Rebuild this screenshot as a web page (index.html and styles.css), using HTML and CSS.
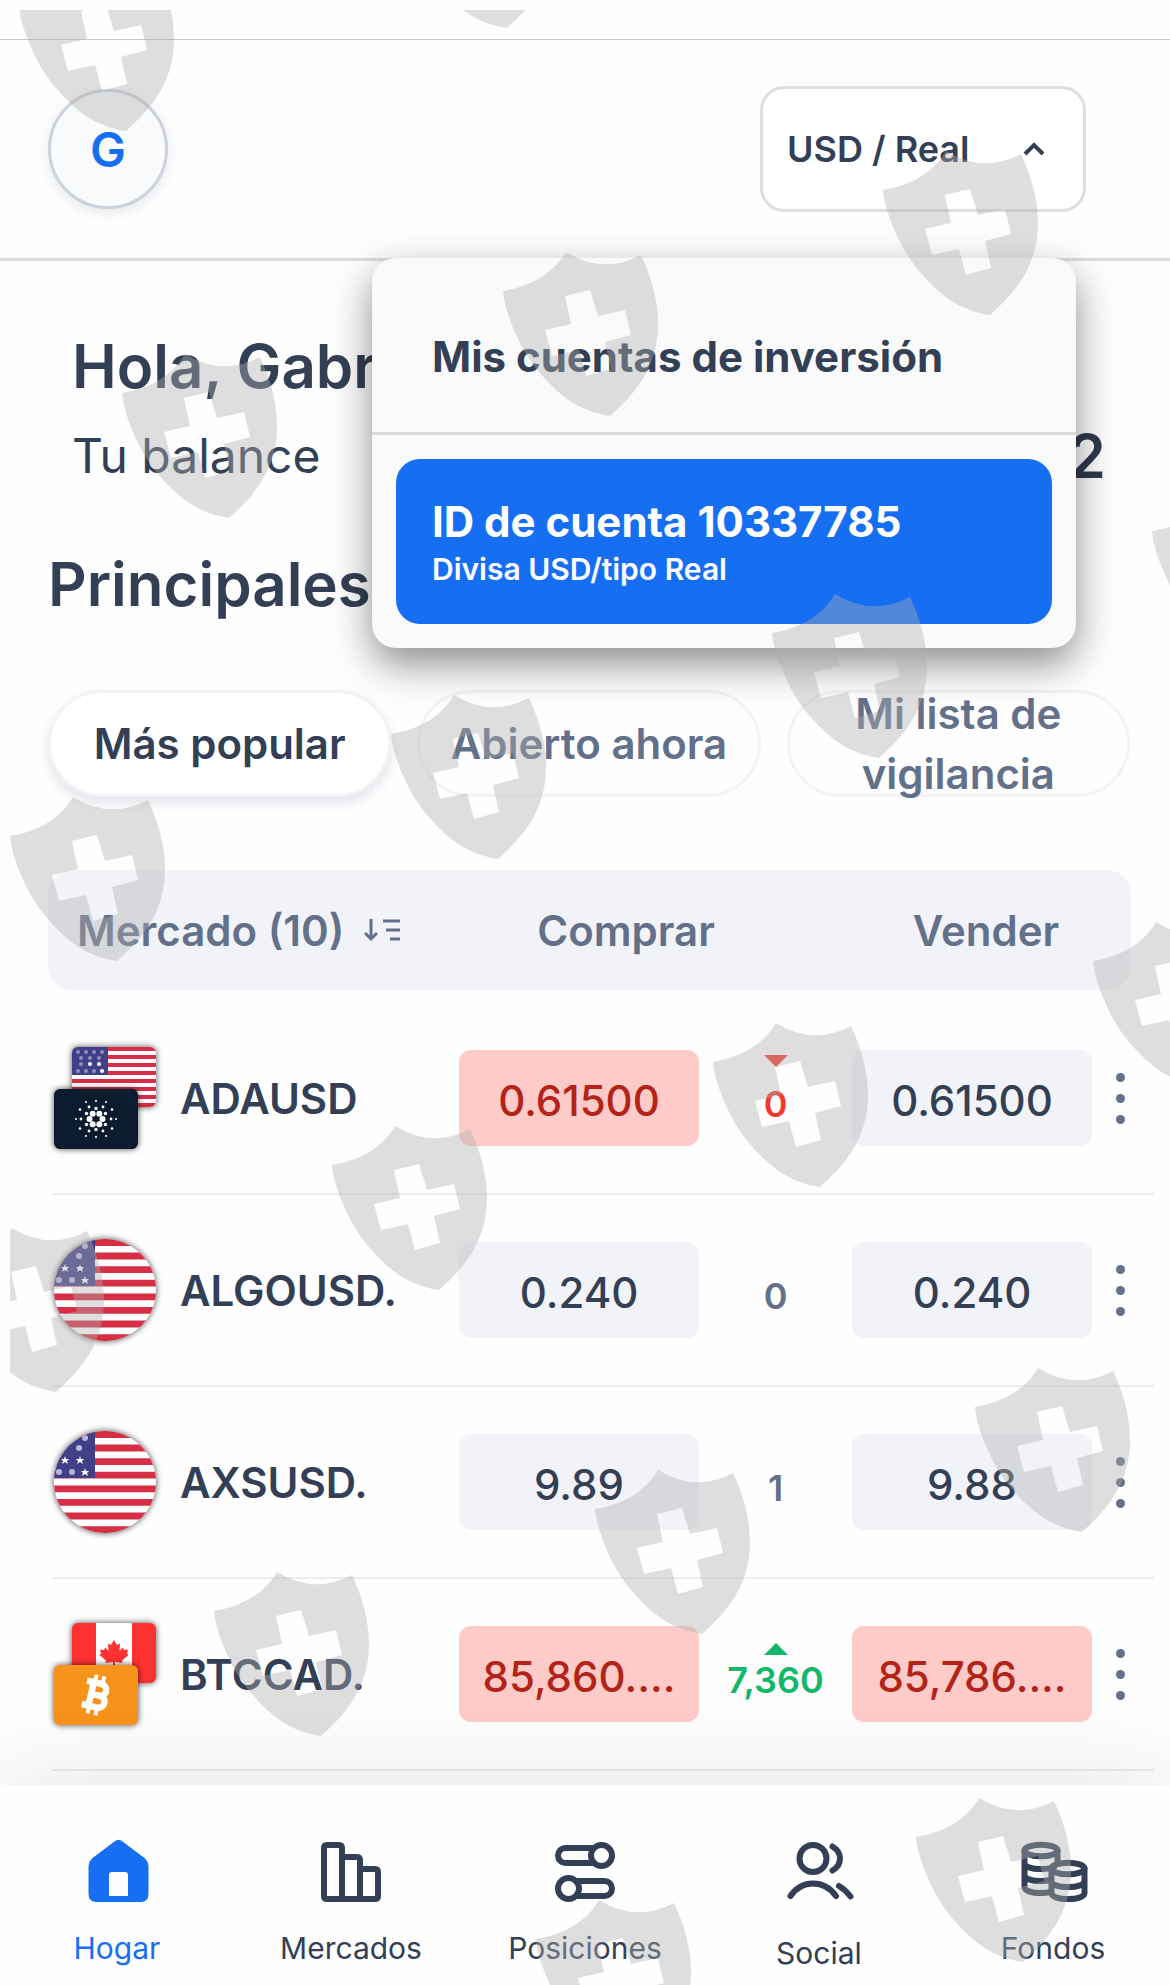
FILE: index.html
```html
<!DOCTYPE html>
<html lang="es">
<head>
<meta charset="utf-8">
<meta name="viewport" content="width=device-width, initial-scale=1">
<title>Hogar</title>
<link rel="stylesheet" href="styles.css">
</head>
<body>
<svg class="defs" aria-hidden="true">
  <defs>
    <path id="shield" fill-rule="evenodd" d="M0 39C20 36 48 26 63 0Q100 23 138 3C148 24 155 48 155 72C155 115 132 142 107 164C80 160 62 147 48 133C34 119 23 104 16 89C6 68 1 52 0 39ZM62 44L68 72L42 78L49 104L76 98L83 124L108 117L102 90L128 83L122 58L95 64L87 38Z"/>
    <polygon id="star" points="0,-4 1,-1 4,-1 2,1 3,4 0,2 -3,4 -2,1 -4,-1 -1,-1"/>
    <clipPath id="round"><circle cx="52" cy="52" r="51"/></clipPath>
    <clipPath id="card-back"><rect x="19" y="1" width="84" height="60" rx="6"/></clipPath>
    <g id="usd-round">
      <g clip-path="url(#round)">
        <rect width="104" height="104" fill="#fff"/>
        <path d="M0 4.500H104M0 18H104M0 31.600H104M0 45.200H104M0 58.800H104M0 72.400H104M0 86H104M0 99.600H104" stroke="#d62f45" stroke-width="6.800"/>
        <rect width="42" height="48" fill="#413f87"/>
        <g fill="#fff"><use href="#star" x="12" y="30"/><use href="#star" x="27" y="30"/><use href="#star" x="32" y="42"/></g>
        <g fill="#b9b8dc"><circle cx="32" cy="8" r="3"/><circle cx="26" cy="18" r="3"/><circle cx="12" cy="18" r="2"/><circle cx="6" cy="42" r="3"/><circle cx="19" cy="42" r="3"/></g>
      </g>
    </g>
  </defs>
</svg>

<div class="status-bar"></div>

<header class="topbar">
  <button class="avatar" type="button" aria-label="Perfil">G</button>
  <button class="account-toggle" type="button" aria-expanded="true" aria-controls="accounts">
    <span>USD / Real</span>
    <svg width="26" height="18" viewBox="0 0 26 18" aria-hidden="true"><path d="M4 14L13 5L22 14" fill="none" stroke="#333f55" stroke-width="4"/></svg>
  </button>
  <section class="accounts" id="accounts">
    <h2 class="accounts-title">Mis cuentas de inversión</h2>
    <div class="accounts-list">
      <button class="account" type="button">
        <span class="account-id">ID de cuenta 10337785</span>
        <span class="account-type">Divisa USD/tipo Real</span>
      </button>
    </div>
  </section>
</header>

<main class="content">
  <section class="summary">
    <h1 class="greeting">Hola, Gabr</h1>
    <div class="balance"><span>Tu balance</span><strong>2</strong></div>
  </section>

  <h2 class="section-title">Principales</h2>

  <div class="chips">
    <button class="chip chip-active" type="button">Más popular</button>
    <button class="chip" type="button">Abierto ahora</button>
    <button class="chip" type="button">Mi lista de vigilancia</button>
  </div>

  <table class="markets">
    <thead>
      <tr class="head">
        <th scope="col"><button class="sort" type="button">Mercado (10)
          <svg width="36" height="24" viewBox="0 0 36 24" aria-hidden="true"><path d="M7 1V21M1 15L7 21L13 15M19 3H36M22 12H36M26 21H36" fill="none" stroke="#63708a" stroke-width="3"/></svg></button></th>
        <th scope="col">Comprar</th>
        <th scope="col">Vender</th>
      </tr>
    </thead>
    <tbody>
      <tr class="row">
        <th scope="row" class="market">
          <svg class="flag" viewBox="0 0 104 104" aria-hidden="true">
            <g class="card"><g clip-path="url(#card-back)">
              <rect x="19" y="1" width="84" height="60" fill="#fff"/>
              <path d="M19 3H103M19 11H103M19 19H103M19 27H103M19 35H103M19 43H103M19 51H103M19 59H103" stroke="#d62f45" stroke-width="4"/>
              <rect x="19" y="1" width="36" height="28" fill="#413f87"/>
              <g fill="#8f8ec0"><circle cx="25" cy="6" r="2"/><circle cx="33" cy="6" r="2"/><circle cx="41" cy="6" r="2"/><circle cx="49" cy="6" r="2"/><circle cx="28" cy="12" r="2"/><circle cx="37" cy="12" r="2"/><circle cx="46" cy="12" r="2"/><circle cx="28" cy="18" r="2"/><circle cx="25" cy="25" r="2"/><circle cx="33" cy="25" r="2"/><circle cx="41" cy="25" r="2"/></g>
              <g fill="#fff"><circle cx="37" cy="18" r="2"/><circle cx="46" cy="18" r="2"/><circle cx="49" cy="25" r="2"/></g>
            </g></g>
            <g class="card"><rect x="1" y="43" width="84" height="60" rx="6" fill="#0b1c2e"/></g>
            <g transform="translate(43 73)" fill="#fff">
              <circle cx="-6.500" cy="0" r="3"/><circle cx="6.500" cy="0" r="3"/><circle cx="-3.300" cy="-5.200" r="3"/><circle cx="3.300" cy="-5.200" r="3"/><circle cx="-3.300" cy="5.200" r="3"/><circle cx="3.300" cy="5.200" r="3"/>
              <circle cx="0" cy="-10.500" r="1.700"/><circle cx="0" cy="10.500" r="1.700"/><circle cx="-9.500" cy="-5.500" r="1.700"/><circle cx="9.500" cy="-5.500" r="1.700"/><circle cx="-9.500" cy="5.500" r="1.700"/><circle cx="9.500" cy="5.500" r="1.700"/>
              <circle cx="-7" cy="-12" r="1.400"/><circle cx="7" cy="-12" r="1.400"/><circle cx="-7" cy="12" r="1.400"/><circle cx="7" cy="12" r="1.400"/><circle cx="-15" cy="0" r="1.400"/><circle cx="15" cy="0" r="1.400"/>
              <circle cx="0" cy="-18" r="1.100"/><circle cx="0" cy="18" r="1.100"/><circle cx="-16" cy="-9.500" r="1.300"/><circle cx="16" cy="-9.500" r="1.300"/><circle cx="-16" cy="9.500" r="1.300"/><circle cx="16" cy="9.500" r="1.300"/><circle cx="-10" cy="-17" r="1"/><circle cx="10" cy="-17" r="1"/><circle cx="-10" cy="17" r="1"/><circle cx="10" cy="17" r="1"/><circle cx="-20" cy="0" r="1"/><circle cx="20" cy="0" r="1"/>
            </g>
          </svg>
          <span>ADAUSD</span>
        </th>
        <td><button class="price price-down" type="button">0.61500</button></td>
        <td class="change change-down"><svg width="24" height="24" viewBox="0 0 24 24" aria-hidden="true"><path d="M0 0H24L12 12Z"/></svg><span>0</span></td>
        <td><button class="price" type="button">0.61500</button></td>
        <td><button class="more" type="button" aria-label="Opciones de ADAUSD"><i></i><i></i><i></i></button></td>
      </tr>
      <tr class="row">
        <th scope="row" class="market">
          <svg class="flag card" viewBox="0 0 104 104" aria-hidden="true"><use href="#usd-round"/></svg>
          <span>ALGOUSD.</span>
        </th>
        <td><button class="price" type="button">0.240</button></td>
        <td class="change"><svg width="24" height="24" aria-hidden="true"></svg><span>0</span></td>
        <td><button class="price" type="button">0.240</button></td>
        <td><button class="more" type="button" aria-label="Opciones de ALGOUSD"><i></i><i></i><i></i></button></td>
      </tr>
      <tr class="row">
        <th scope="row" class="market">
          <svg class="flag card" viewBox="0 0 104 104" aria-hidden="true"><use href="#usd-round"/></svg>
          <span>AXSUSD.</span>
        </th>
        <td><button class="price" type="button">9.89</button></td>
        <td class="change"><svg width="24" height="24" aria-hidden="true"></svg><span>1</span></td>
        <td><button class="price" type="button">9.88</button></td>
        <td><button class="more" type="button" aria-label="Opciones de AXSUSD"><i></i><i></i><i></i></button></td>
      </tr>
      <tr class="row">
        <th scope="row" class="market">
          <svg class="flag" viewBox="0 0 104 104" aria-hidden="true">
            <g class="card"><g clip-path="url(#card-back)">
              <rect x="19" y="1" width="84" height="60" fill="#ff3131"/>
              <rect x="43" y="1" width="36" height="60" fill="#fff"/>
              <path fill="#ff3131" d="M61 18L64 23L67 21.500L66.500 29L70 25.500L71 28L75 27.500L74 31.500L75.500 33L69 38.500L69.500 41L62 40V46H60V40L52.500 41L53 38.500L46.500 33L48 31.500L47 27.500L51 28L52 25.500L55.500 29L55 21.500L58 23Z"/>
            </g></g>
            <g class="card"><rect x="1" y="43" width="84" height="60" rx="6" fill="#f7931a"/></g>
            <g transform="translate(43 73) rotate(13)" fill="none" stroke="#fff">
              <path d="M-5 -12V12M-12 -12H3A6 6 0 0 1 3 0H-5M3 0H4A6 6 0 0 1 4 12H-12" stroke-width="6.500"/>
              <path d="M-4 -12V-20M4 -12V-20M-4 12V20M4 12V20" stroke-width="4"/>
            </g>
          </svg>
          <span>BTCCAD.</span>
        </th>
        <td><button class="price price-down" type="button">85,860....</button></td>
        <td class="change change-up"><svg width="24" height="24" viewBox="0 0 24 24" aria-hidden="true"><path d="M0 24H24L12 12Z"/></svg><span>7,360</span></td>
        <td><button class="price price-down" type="button">85,786....</button></td>
        <td><button class="more" type="button" aria-label="Opciones de BTCCAD"><i></i><i></i><i></i></button></td>
      </tr>
    </tbody>
  </table>
</main>

<nav class="tabs">
  <a class="tab tab-active" href="#hogar">
    <svg width="72" height="72" viewBox="0 0 72 72" aria-hidden="true"><path class="solid" fill-rule="evenodd" d="M33.500 5.500Q37.500 2 41.500 5.500L63.500 22Q67.500 25.500 67.500 31V58Q67.500 66 59.500 66H15.500Q7.500 66 7.500 58V31Q7.500 25.500 11.500 22ZM28 60H47V39Q47 36 44 36H31Q28 36 28 39Z"/></svg>
    <span>Hogar</span>
  </a>
  <a class="tab" href="#mercados">
    <svg width="72" height="72" viewBox="0 0 72 72" aria-hidden="true"><path d="M12 9H24Q27 9 27 12V63H12Q9 63 9 60V12Q9 9 12 9ZM27 21H42Q45 21 45 24V63M45 33H60Q63 33 63 36V60Q63 63 60 63H27"/></svg>
    <span>Mercados</span>
  </a>
  <a class="tab" href="#posiciones">
    <svg width="72" height="72" viewBox="0 0 72 72" aria-hidden="true"><path d="M43 12H16.500A7.500 7.500 0 0 0 16.500 27H43M29 45H55.500A7.500 7.500 0 0 1 55.500 60H29"/><circle cx="52.500" cy="19.500" r="10.500"/><circle cx="19.500" cy="52.500" r="10.500"/></svg>
    <span>Posiciones</span>
  </a>
  <a class="tab" href="#social">
    <svg width="72" height="77" viewBox="0 0 72 77" aria-hidden="true"><circle cx="30" cy="22.500" r="13.500"/><path d="M49.500 10.500Q57 15 57 22.500Q57 30 49.500 34.500M7.500 60Q16 47.500 30 47.500Q44 47.500 53 60M56 50Q62 53.500 67.500 60.500"/></svg>
    <span>Social</span>
  </a>
  <a class="tab" href="#fondos">
    <svg width="72" height="72" viewBox="0 0 72 72" aria-hidden="true"><ellipse cx="24" cy="14.500" rx="16.500" ry="5.800"/><path d="M7.500 14.500V51C7.500 54.500 14 57 24 57Q29 57 33 56M40.500 14.500V27M7.500 27C7.500 30.500 14 33 24 33Q32 33 37 31M7.500 39C7.500 42.500 14 45 24 45Q29 45 33 44"/><ellipse cx="51" cy="32.500" rx="16.500" ry="5.800"/><path d="M34.500 32.500V57C34.500 60.500 41 63 51 63S67.500 60.500 67.500 57V32.500M34.500 45C34.500 48.500 41 51 51 51S67.500 48.500 67.500 45"/></svg>
    <span>Fondos</span>
  </a>
</nav>

<div class="watermark" aria-hidden="true">
  <svg width="100%" height="100%">
    <g transform="translate(-10 -10)">
      <use href="#shield" x="19" y="-33"/>
      <use href="#shield" x="400" y="-136"/>
      <use href="#shield" x="883" y="151"/>
      <use href="#shield" x="503" y="252"/>
      <use href="#shield" x="122" y="354"/>
      <use href="#shield" x="1152" y="492"/>
      <use href="#shield" x="772" y="594"/>
      <use href="#shield" x="391" y="695"/>
      <use href="#shield" x="10" y="797"/>
      <use href="#shield" x="1093" y="922"/>
      <use href="#shield" x="713" y="1023"/>
      <use href="#shield" x="332" y="1126"/>
      <use href="#shield" x="-51" y="1228"/>
      <use href="#shield" x="975" y="1368"/>
      <use href="#shield" x="595" y="1470"/>
      <use href="#shield" x="214" y="1572"/>
      <use href="#shield" x="916" y="1798"/>
      <use href="#shield" x="536" y="1900"/>
    </g>
  </svg>
</div>
</body>
</html>
```

FILE: styles.css
```css
* { box-sizing: border-box; }

body {
  position: relative;
  margin: 0;
  overflow-x: hidden;
  background: #fefefe;
  color: #333f55;
  font-family: Inter, "Liberation Sans", sans-serif;
  font-optical-sizing: none;
}

h1, h2 { margin: 0; font-weight: 600; }

button {
  margin: 0;
  padding: 0;
  border: 0;
  background: none;
  color: inherit;
  font: inherit;
  cursor: pointer;
}

.defs { position: absolute; width: 0; height: 0; }

.status-bar { height: 40px; border-bottom: 1px solid #c3c6c7; }

/* Top bar and account menu */
.topbar {
  position: relative;
  z-index: 2;
  display: flex;
  align-items: center;
  justify-content: space-between;
  height: 221px;
  padding: 0 84px 0 48px;
  border-bottom: 3px solid #dcdddd;
}

.avatar {
  width: 120px;
  height: 120px;
  border: 3px solid #ccd2dd;
  border-radius: 50%;
  background: #f9fafb;
  box-shadow: 0 4px 12px rgba(51, 63, 85, .12);
  color: #166ff3;
  font-size: 48px;
  font-weight: 600;
}

.account-toggle {
  display: flex;
  align-items: center;
  justify-content: space-between;
  width: 326px;
  height: 126px;
  padding: 0 36px 0 24px;
  border: 3px solid #dedede;
  border-radius: 24px;
  background: #fff;
  font-size: 36px;
  font-weight: 600;
}

.accounts {
  position: absolute;
  top: 218px;
  right: 94px;
  width: 704px;
  border-radius: 24px;
  background: #fafafa;
  box-shadow: 0 16px 40px rgba(0, 0, 0, .45);
}

.accounts-title {
  padding: 73px 60px 49px;
  border-bottom: 3px solid #d9d9da;
  font-size: 42px;
  font-weight: 700;
  line-height: 52px;
}

.accounts-list { padding: 24px; }

.account {
  display: flex;
  flex-direction: column;
  width: 100%;
  padding: 36px 36px 35px;
  border-radius: 24px;
  background: #166ff3;
  color: #fff;
  text-align: left;
}

.account-id { font-size: 42px; font-weight: 700; line-height: 54px; }
.account-type { font-size: 30px; font-weight: 600; line-height: 40px; }

/* Greeting and balance */
.content { padding: 69px 0 14px; }
.summary { padding: 0 64px 0 72px; }
.greeting { font-size: 60px; line-height: 72px; }

.balance {
  display: flex;
  align-items: center;
  justify-content: space-between;
  margin-top: 18px;
  font-size: 48px;
  line-height: 72px;
}

.balance strong { color: #2f3a50; font-size: 60px; font-weight: 600; }

.section-title {
  margin: 56px 48px 70px;
  font-size: 60px;
  line-height: 72px;
}

/* Filters */
.chips {
  display: grid;
  grid-template-columns: repeat(3, 1fr);
  gap: 26px;
  padding: 0 40px 0 48px;
}

.chip {
  display: flex;
  align-items: center;
  justify-content: center;
  height: 107px;
  padding: 0 20px;
  border: 3px solid #f3f3f5;
  border-radius: 54px;
  color: #63708a;
  font-size: 42px;
  font-weight: 600;
  line-height: 60px;
}

.chip-active {
  background: #fff;
  box-shadow: 0 6px 12px rgba(60, 60, 110, .14);
  color: #333f55;
}

/* Market table */
.markets, .markets thead, .markets tbody { display: block; }
.markets { margin-top: 73px; }
.markets th, .markets td { padding: 0; }

.head {
  display: grid;
  grid-template-columns: 1fr 430px 290px;
  align-items: center;
  height: 120px;
  margin: 0 39px 13px 48px;
  border-radius: 24px;
  background: #f2f3f8;
  color: #63708a;
  font-size: 42px;
}

.head th { font-weight: 600; }

.sort {
  display: flex;
  align-items: center;
  gap: 20px;
  padding-left: 29px;
  white-space: nowrap;
}

.row {
  display: grid;
  grid-template-columns: 1fr 240px 153px 240px 62px;
  align-items: center;
  height: 192px;
  margin: 0 16px 0 53px;
  border-bottom: 2px solid #ecedef;
}

.market {
  display: flex;
  align-items: center;
  gap: 23px;
  font-size: 42px;
  font-weight: 600;
}

.flag { width: 104px; height: 104px; overflow: visible; }
.card { filter: drop-shadow(0 0 3px rgba(0, 0, 0, .7)); }

.price {
  display: block;
  width: 100%;
  height: 96px;
  padding-top: 4px;
  border-radius: 12px;
  background: #f2f3f8;
  font-size: 42px;
  font-weight: 500;
}

.price-down { background: #fecbc8; color: #b32318; }

.change {
  display: flex;
  flex-direction: column;
  align-items: center;
  color: #63708a;
  font-size: 36px;
  font-weight: 600;
  line-height: 50px;
}

.markets .change { padding-bottom: 12px; }
.change svg { fill: currentColor; }
.change-down { color: #f03a2e; }
.change-up { color: #12b76a; }

.more {
  display: flex;
  flex-direction: column;
  align-items: center;
  gap: 12px;
  width: 56px;
}

.more i {
  width: 9px;
  height: 9px;
  border-radius: 50%;
  background: #63708a;
}

/* Bottom navigation */
.tabs {
  position: relative;
  z-index: 1;
  display: grid;
  grid-template-columns: repeat(5, 1fr);
  min-height: 200px;
  padding-top: 51px;
  background: #fefefe;
  box-shadow: 0 0 100px rgba(30, 35, 60, .12);
}

.tab {
  display: flex;
  flex-direction: column;
  align-items: center;
  gap: 22px;
  color: #333f55;
  font-size: 30px;
  line-height: 36px;
  text-decoration: none;
}

.tab svg {
  fill: none;
  stroke: currentColor;
  stroke-width: 6px;
  stroke-linecap: round;
}

.tab .solid { fill: currentColor; stroke: none; }
.tab-active { color: #166ff3; }

/* Shield pattern over the whole page */
.watermark {
  position: absolute;
  z-index: 3;
  inset: 10px 0 0 10px;
  overflow: hidden;
  fill: rgba(174, 174, 174, .4);
  pointer-events: none;
}

.watermark svg { display: block; }
```
